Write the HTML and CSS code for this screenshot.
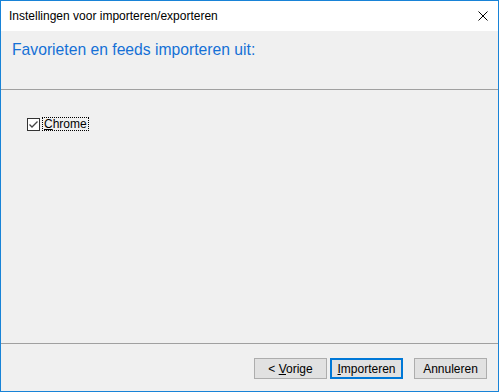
FILE: index.html
```html
<!DOCTYPE html>
<html lang="nl">
<head>
<meta charset="UTF-8" />
<title>Instellingen voor importeren/exporteren</title>
<link rel="stylesheet" href="styles.css">
</head>
<body>
<div class="window">
  <div class="titlebar">
    <span class="title">Instellingen voor importeren/exporteren</span>
    <svg class="close" width="10" height="10" viewBox="0 0 10 10">
      <path d="M0.5 0.5 L9.5 9.5 M9.5 0.5 L0.5 9.5" stroke="#000" stroke-width="1" fill="none" />
    </svg>
  </div>

  <div class="header">
    <h1>Favorieten en feeds importeren uit:</h1>
  </div>

  <div class="content">
    <label class="check">
      <svg class="box" width="13" height="13" viewBox="0 0 13 13">
        <rect x="0.5" y="0.5" width="12" height="12" fill="#fff" stroke="#333" />
        <path d="M2.5 6.5 L5 9 L10.5 3.5" stroke="#444" stroke-width="1.3" fill="none" />
      </svg>
      <span class="focus"><u>C</u>hrome</span>
    </label>
  </div>

  <div class="footer">
    <button class="btn">&lt; <u>V</u>orige</button>
    <button class="btn default"><u>I</u>mporteren</button>
    <button class="btn cancel">Annuleren</button>
  </div>
</div>
</body>
</html>
```

FILE: styles.css
```css
* {
  margin: 0; padding: 0; box-sizing: border-box;
}
body {
  font-family: "Liberation Sans", Arial, sans-serif;
  font-size: 12px;
  color: #000;
  background: #f0f0f0;
}
.window {
  width: 499px;
  height: 392px;
  border: 1px solid #1883d7;
  display: flex;
  flex-direction: column;
  background: #f0f0f0;
}
.titlebar {
  height: 30px;
  background: #fff;
  display: flex;
  align-items: center;
  justify-content: space-between;
  padding: 0 10px 0 8px;
}
.title {
  font-size: 12px;
  line-height: 16px;
  margin-top: -1px;
}
.close {
  display: block;
  margin-top: -1px;
}
.header {
  height: 59px;
  border-bottom: 1px solid #a0a0a0;
  padding: 9px 0 0 11px;
}
h1 {
  font-family: "Liberation Sans", Arial, sans-serif;
  font-weight: normal;
  font-size: 15.7px;
  line-height: 20px;
  color: #1570d6;
}
.content {
  flex: 1;
  border-bottom: 1px solid #a0a0a0;
  padding: 27px 0 0 26px;
}
.check {
  display: flex;
  align-items: center;
}
.box {
  display: block;
  margin-top: 1px;
}
.focus {
  margin-left: 2px;
  border: 1px dotted #000;
  padding: 0 1px;
  line-height: 12px;
  height: 14px;
}
.footer {
  height: 47px;
  display: flex;
  align-items: flex-start;
  justify-content: flex-end;
  padding: 14px 11px 0 0;
}
.btn {
  width: 73px;
  height: 21px;
  background: #e1e1e1;
  border: 1px solid #adadad;
  font-family: "Liberation Sans", Arial, sans-serif;
  font-size: 12px;
  color: #000;
  line-height: 16px;
}
.btn.default {
  border: 2px solid #0078d7;
  margin-left: 3px;
}
.btn.cancel {
  margin-left: 11px;
}
```
